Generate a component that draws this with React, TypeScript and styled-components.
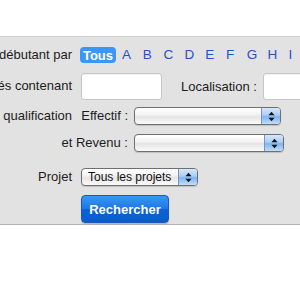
import React from "react";
import styled, { createGlobalStyle } from "styled-components";

const GlobalStyle = createGlobalStyle`
    html, body {
        margin: 0;
        padding: 0;
        background: #fff;
        overflow: hidden;
    }
    body {
        font-family: "Liberation Sans", Arial, sans-serif;
        font-size: 13px;
        color: #1c1c1c;
    }
`;

const Panel = styled.div`
    margin-top: 36px;
    background-color: #e2e2e2;
    border-top: 1px solid #cfcfcf;
    border-bottom: 1px solid #b4b4b4;
    padding: 10px 0 1px;
    display: flex;
    flex-direction: column;
`;

const Row = styled.div<{ $top: number; $h: number }>`
    display: grid;
    grid-template-columns: 72px 1fr;
    column-gap: 9px;
    align-items: center;
    height: ${({ $h }) => $h}px;
    margin-top: ${({ $top }) => $top}px;
`;

const Label = styled.div`
    display: flex;
    justify-content: flex-end;
    white-space: nowrap;
    line-height: 16px;
`;

const Cell = styled.div<{ $gap?: number }>`
    display: flex;
    align-items: center;
    gap: ${({ $gap }) => $gap ?? 0}px;
    white-space: nowrap;
`;

const SubLabel = styled(Label)`
    width: 47px;
`;

const Badge = styled.span`
    display: inline-flex;
    align-items: center;
    justify-content: center;
    width: 36px;
    height: 16px;
    margin-left: -1px;
    border-radius: 4px;
    background: #3b96f7;
    color: #fff;
    font-weight: bold;
    font-size: 13px;
`;

const Letters = styled.div`
    display: flex;
    margin-left: 6px;
`;

const Letter = styled.a`
    width: 20.8px;
    color: #2550c6;
    text-decoration: none;
    font-size: 13.5px;
    line-height: 16px;
`;

const TextInput = styled.div<{ $w: number }>`
    width: ${({ $w }) => $w}px;
    height: 27px;
    box-sizing: border-box;
    flex-shrink: 0;
    background: #fff;
    border: 1px solid #c6c6c6;
    border-radius: 3px;
    box-shadow: inset 0 1px 1px rgba(0, 0, 0, 0.06);
`;

const Select = styled.div<{ $w: number }>`
    width: ${({ $w }) => $w}px;
    height: 18px;
    box-sizing: border-box;
    flex-shrink: 0;
    display: flex;
    border: 1px solid #6f6f6f;
    border-radius: 4px;
    overflow: hidden;
    background: linear-gradient(#ffffff 0%, #f4f4f4 40%, #e4e4e4 55%, #fbfbfb 100%);
    box-shadow: 0 1px 1px rgba(0, 0, 0, 0.15);
`;

const SelectValue = styled.div`
    flex: 1;
    padding-left: 6px;
    font-size: 12px;
    line-height: 16px;
    color: #111;
    overflow: hidden;
`;

const ArrowBox = styled.div`
    width: 18px;
    display: flex;
    align-items: center;
    justify-content: center;
    border-left: 1px solid #7d93b8;
    background: linear-gradient(#d6e8fc 0%, #a9cdf6 45%, #7fb4f0 55%, #c2ddfa 100%);
`;

const Button = styled.button`
    width: 88px;
    height: 28px;
    box-sizing: border-box;
    border: 1px solid #1b58b8;
    border-radius: 4px;
    background: linear-gradient(#3b97f3 0%, #1a78e6 50%, #0b62d6 51%, #0a5ccc 100%);
    color: #fff;
    font-family: "Liberation Sans", Arial, sans-serif;
    font-size: 13px;
    font-weight: bold;
    padding: 0;
    box-shadow: 0 1px 1px rgba(0, 0, 0, 0.2);
`;

const Arrows: React.FC = () => (
    <svg width="7" height="11" viewBox="0 0 7 11">
        <polygon points="0.5,4.2 3.5,0.8 6.5,4.2" fill="#111" />
        <polygon points="0.5,6.8 3.5,10.2 6.5,6.8" fill="#111" />
    </svg>
);

const Dropdown: React.FC<{ width: number; value?: string }> = ({ width, value }) => (
    <Select $w={width}>
        <SelectValue>{value}</SelectValue>
        <ArrowBox>
            <Arrows />
        </ArrowBox>
    </Select>
);

const letters = ["A", "B", "C", "D", "E", "F", "G", "H", "I"];

const App: React.FC = () => {
    return (
        <>
            <GlobalStyle />
            <Panel>
                <Row $top={0} $h={16}>
                    <Label>Sociétés débutant par</Label>
                    <Cell>
                        <Badge>Tous</Badge>
                        <Letters>
                            {letters.map((l) => (
                                <Letter href="#" key={l}>{l}</Letter>
                            ))}
                        </Letters>
                    </Cell>
                </Row>
                <Row $top={9} $h={28}>
                    <Label>Sociétés contenant</Label>
                    <Cell $gap={19}>
                        <TextInput $w={81} />
                        <Cell $gap={6}>
                            <span>Localisation :</span>
                            <TextInput $w={80} />
                        </Cell>
                    </Cell>
                </Row>
                <Row $top={7} $h={18}>
                    <Label>Filtrer par qualification</Label>
                    <Cell $gap={6}>
                        <SubLabel>Effectif :</SubLabel>
                        <Dropdown width={147} />
                    </Cell>
                </Row>
                <Row $top={9} $h={18}>
                    <Label />
                    <Cell $gap={6}>
                        <SubLabel>et Revenu :</SubLabel>
                        <Dropdown width={150} />
                    </Cell>
                </Row>
                <Row $top={16} $h={18}>
                    <Label>Projet</Label>
                    <Cell>
                        <Dropdown width={117} value="Tous les projets" />
                    </Cell>
                </Row>
                <Row $top={9} $h={28}>
                    <Label />
                    <Cell>
                        <Button>Rechercher</Button>
                    </Cell>
                </Row>
            </Panel>
        </>
    );
};

export default App;
